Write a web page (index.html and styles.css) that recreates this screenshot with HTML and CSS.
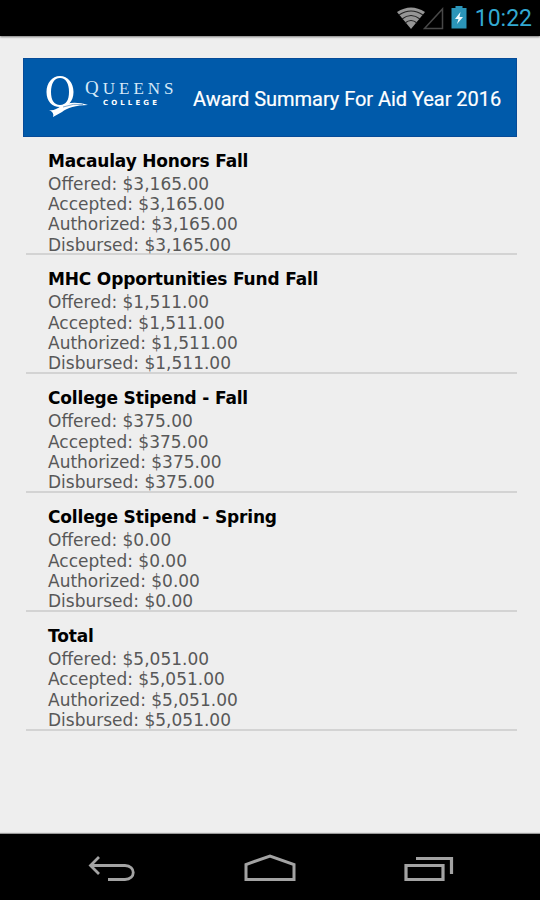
FILE: index.html
```html
<!DOCTYPE html>
<html lang="en">
<head>
    <meta charset="UTF-8">
    <meta name="viewport" content="width=device-width, initial-scale=1.0">
    <title>Award Summary</title>
    <link rel="stylesheet" href="styles.css">
</head>
<body>
    <div class="status-bar">
        <svg class="wifi" width="28" height="22" viewBox="0 0 28 22">
            <path d="M0 5 Q14 -4 28 5 L14 22 Z" fill="#969696"/>
            <path d="M2 8 Q14 0 26 8 M5 12 Q14 5 23 12 M8 16 Q14 11 20 16" fill="none" stroke="#222" stroke-width="1.2"/>
        </svg>
        <svg class="signal" width="21" height="23" viewBox="0 0 21 23">
            <path d="M1.5 21.5 L19.5 2 V21.5 Z" fill="none" stroke="#484848" stroke-width="1.5"/>
        </svg>
        <svg class="battery" width="16" height="23" viewBox="0 0 16 23">
            <path d="M4.5 0 H11.5 V2 H15.5 V22.5 H0.5 V2 H4.5 Z" fill="#2b95b9"/>
            <path d="M9.5 6 L4 13 H7.5 L6 18 L12 11 H8.5 Z" fill="#eefaff"/>
        </svg>
        <span class="clock">10:22</span>
    </div>

    <div class="content">
        <div class="header">
            <svg class="emblem" width="44" height="44" viewBox="0 0 44 44">
                <path fill="#fff" fill-rule="evenodd" d="M15 1 C23 1 28.5 8 28.5 17 C28.5 26 23 32 15 32 C7 32 1.5 26 1.5 17 C1.5 8 7 1 15 1 Z M15 3 C9 3 6 9 6 17 C6 25 9 30 15 30 C21 30 24 25 24 17 C24 9 21 3 15 3 Z"/>
                <path fill="#fff" d="M4 35 C8 36 12 34 16 31 C23 27 33 27 43 30 C31 30 22 33 17 37 L8 42 C9 39 8 37 4 35 Z"/>
                <path d="M18 32 Q29 28 38 29.5" fill="none" stroke="#0058a9" stroke-width=".5"/>
            </svg>
            <div class="college">
                <div class="queens"><span>Q</span>UEENS</div>
                <div class="sub">COLLEGE</div>
            </div>
            <h1>Award Summary For Aid Year 2016</h1>
        </div>

        <div class="award">
            <h2>Macaulay Honors Fall</h2>
            <p>Offered: $3,165.00</p>
            <p>Accepted: $3,165.00</p>
            <p>Authorized: $3,165.00</p>
            <p>Disbursed: $3,165.00</p>
        </div>
        <div class="award">
            <h2>MHC Opportunities Fund Fall</h2>
            <p>Offered: $1,511.00</p>
            <p>Accepted: $1,511.00</p>
            <p>Authorized: $1,511.00</p>
            <p>Disbursed: $1,511.00</p>
        </div>
        <div class="award">
            <h2>College Stipend - Fall</h2>
            <p>Offered: $375.00</p>
            <p>Accepted: $375.00</p>
            <p>Authorized: $375.00</p>
            <p>Disbursed: $375.00</p>
        </div>
        <div class="award">
            <h2>College Stipend - Spring</h2>
            <p>Offered: $0.00</p>
            <p>Accepted: $0.00</p>
            <p>Authorized: $0.00</p>
            <p>Disbursed: $0.00</p>
        </div>
        <div class="award">
            <h2>Total</h2>
            <p>Offered: $5,051.00</p>
            <p>Accepted: $5,051.00</p>
            <p>Authorized: $5,051.00</p>
            <p>Disbursed: $5,051.00</p>
        </div>
    </div>

    <div class="nav-bar">
        <svg width="48" height="30" viewBox="0 0 48 30">
            <path d="M11 3 L2.5 11.5 L11 20 M3 11.5 H37 C48 11.5 48 25.5 37 25.5 H20" fill="none" stroke="#a3a3a3" stroke-width="2.8"/>
        </svg>
        <svg width="52" height="30" viewBox="0 0 52 30">
            <path d="M2 25.5 V10.5 L26 2 L50 10.5 V25.5 Z" fill="none" stroke="#a3a3a3" stroke-width="3"/>
        </svg>
        <svg width="50" height="30" viewBox="0 0 50 30">
            <path d="M2 11.5 H39 V25.5 H2 Z M12 4.5 H47.5 V20" fill="none" stroke="#a3a3a3" stroke-width="3.2"/>
        </svg>
    </div>
</body>
</html>
```
FILE: styles.css
```css
* {
    margin: 0;
    padding: 0;
    box-sizing: border-box;
}

body {
    display: flex;
    flex-direction: column;
    width: 540px;
    height: 900px;
    background: #eee;
    font-family: 'DejaVu Sans', sans-serif;
    overflow: hidden;
}

svg {
    display: block;
    flex: none;
}

.status-bar {
    display: flex;
    align-items: flex-start;
    justify-content: flex-end;
    height: 36px;
    padding: 7px 8px 0 0;
    background: #000;
    box-shadow: 0 1px 2px #777;
}

.signal {
    margin-left: -2px;
}

.battery {
    margin: -1px 8px 0 7px;
}

.clock {
    font-family: Roboto, sans-serif;
    font-size: 23px;
    line-height: 24px;
    color: #33a9d2;
}

.content {
    flex: 1;
    padding: 22px 23px 0;
}

.header {
    display: flex;
    height: 78.5px;
    padding: 16px 0 0 21px;
    background: #005aaa;
    border: 1px solid #064b98;
    color: #fff;
}

.college {
    width: 94px;
    margin-left: -4px;
    padding-top: 2px;
}

.queens {
    font-family: 'Liberation Serif', serif;
    font-size: 17px;
    line-height: 22px;
    letter-spacing: 4px;
    white-space: nowrap;
    color: #d5e8f8;
}

.queens span {
    font-size: 19px;
}

.sub {
    margin: -1px 0 0 18px;
    font-size: 7px;
    font-weight: bold;
    line-height: 9px;
    letter-spacing: 3.1px;
}

.header h1 {
    margin: 10px 0 0 14px;
    font-family: Roboto, sans-serif;
    font-size: 20px;
    font-weight: 400;
    line-height: 28px;
    letter-spacing: -0.04px;
    white-space: nowrap;
    -webkit-text-stroke: 0.2px #fff;
}

.award {
    height: 118.9px;
    margin-left: 3px;
    padding: 12px 0 0 22px;
    border-bottom: 2px solid #d3d3d3;
}

.award h2 {
    font-size: 17px;
    line-height: 25px;
    letter-spacing: -0.17px;
    color: #000;
}

.award p {
    font-size: 17px;
    line-height: 20.35px;
    color: #585858;
}

.nav-bar {
    display: flex;
    justify-content: space-between;
    height: 66.5px;
    padding: 20px 86px 0 88px;
    background: #000;
    box-shadow: 0 -1px 1px #999;
}
```
